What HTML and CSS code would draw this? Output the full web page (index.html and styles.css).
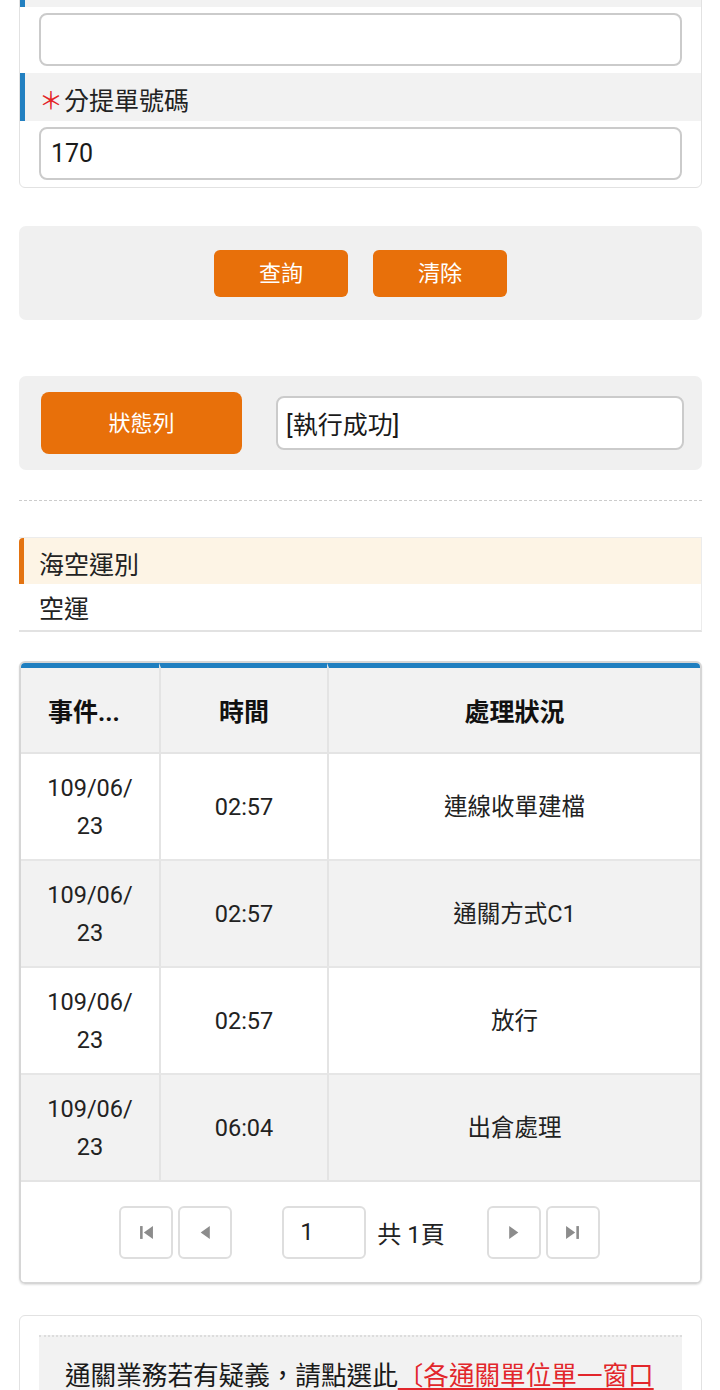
FILE: index.html
```html
<!DOCTYPE html>
<html lang="zh-Hant">
<head>
<meta charset="utf-8">
<title>查詢</title>
<link rel="stylesheet" href="styles.css">
</head>
<body>
<div class="page">
  <section class="card form-card">
    <div class="field-label">主提單號碼</div>
    <div class="field-input"><div class="input"></div></div>
    <div class="field-label"><span class="req">＊</span>分提單號碼</div>
    <div class="field-input"><div class="input">170</div></div>
  </section>

  <section class="panel actions">
    <button class="btn">查詢</button>
    <button class="btn">清除</button>
  </section>

  <section class="panel status">
    <button class="btn btn-status">狀態列</button>
    <div class="input status-input">[執行成功]</div>
  </section>

  <div class="divider"></div>

  <section class="ship">
    <div class="ship-label">海空運別</div>
    <div class="ship-value">空運</div>
  </section>

  <section class="table-card">
    <table class="grid">
      <colgroup><col class="c1"><col class="c2"><col class="c3"></colgroup>
      <thead>
        <tr><th>事件...</th><th>時間</th><th>處理狀況</th></tr>
      </thead>
      <tbody>
        <tr><td>109/06/<br>23</td><td>02:57</td><td>連線收單建檔</td></tr>
        <tr class="alt"><td>109/06/<br>23</td><td>02:57</td><td>通關方式C1</td></tr>
        <tr><td>109/06/<br>23</td><td>02:57</td><td>放行</td></tr>
        <tr class="alt"><td>109/06/<br>23</td><td>06:04</td><td>出倉處理</td></tr>
      </tbody>
    </table>
    <div class="pager">
      <div class="pg-group">
        <button class="pg-btn"><svg viewBox="0 0 14 14"><rect x="1" y="1" width="2.4" height="12" fill="#8c8c8c"/><path d="M13 1 L4.5 7 L13 13 Z" fill="#8c8c8c"/></svg></button>
        <button class="pg-btn"><svg viewBox="0 0 14 14"><path d="M11 1 L2.5 7 L11 13 Z" fill="#8c8c8c"/></svg></button>
      </div>
      <div class="pg-input">1</div>
      <div class="pg-total">共 1頁</div>
      <div class="pg-group">
        <button class="pg-btn"><svg viewBox="0 0 14 14"><path d="M3 1 L11.5 7 L3 13 Z" fill="#8c8c8c"/></svg></button>
        <button class="pg-btn"><svg viewBox="0 0 14 14"><path d="M1 1 L9.5 7 L1 13 Z" fill="#8c8c8c"/><rect x="10.6" y="1" width="2.4" height="12" fill="#8c8c8c"/></svg></button>
      </div>
    </div>
  </section>

  <section class="card footer-card">
    <div class="notice">通關業務若有疑義，請點選此<a class="link" href="#">〔各通關單位單一窗口聯絡資訊〕</a></div>
  </section>
</div>
</body>
</html>
```

FILE: styles.css
```css
* { box-sizing: border-box; }

body {
  margin: 0;
  background: #ffffff;
  font-family: Roboto, "Noto Sans CJK TC", sans-serif;
  color: #222222;
}

.page {
  padding: 0 18px 40px 19px;
}

.card {
  border: 1px solid #e2e2e2;
  border-radius: 6px;
  background: #ffffff;
}

.form-card {
  margin-top: -42px;
  overflow: hidden;
}

.field-label {
  height: 48px;
  background: #f2f2f2;
  border-left: 5px solid #2280c1;
  display: flex;
  align-items: center;
  padding-left: 16px;
  padding-top: 3px;
  font-size: 25px;
  color: #222;
}

.req {
  color: #e42326;
  font-family: "Noto Sans CJK TC", sans-serif;
  font-size: 24px;
  margin-left: -2px;
  margin-right: 1px;
}

.field-input {
  padding: 6px 19px 7px;
}

.input {
  height: 53px;
  border: 2px solid #cbcbcb;
  border-radius: 8px;
  background: #ffffff;
  display: flex;
  align-items: center;
  padding-left: 10px;
  font-size: 25px;
  color: #1a1a1a;
}

.panel {
  background: #f0f0f0;
  border-radius: 7px;
  height: 94px;
  display: flex;
  align-items: center;
}

.actions {
  margin-top: 38px;
  justify-content: center;
  gap: 25px;
}

.btn {
  width: 134px;
  height: 47px;
  border: none;
  border-radius: 6px;
  background: #e8700a;
  color: #ffffff;
  font-family: "Noto Sans CJK TC", sans-serif;
  font-size: 22px;
  padding: 0 0 5px;
}

.status {
  margin-top: 56px;
  padding: 0 18px 0 22px;
}

.btn-status {
  width: 201px;
  height: 62px;
  border-radius: 8px;
}

.status-input {
  flex: 1;
  margin-left: 34px;
  height: 54px;
  padding-left: 8px;
}

.divider {
  margin-top: 30px;
  border-top: 1px dashed #cccccc;
}

.ship {
  margin-top: 36px;
  border: 1px solid #ececec;
  border-bottom: 2px solid #e2e2e2;
  border-left: none;
}

.ship-label {
  height: 46px;
  background: #fdf4e5;
  border-left: 5px solid #e37311;
  border-top-left-radius: 4px;
  display: flex;
  align-items: center;
  padding-left: 15px;
  padding-top: 3px;
  font-size: 25px;
}

.ship-value {
  height: 46px;
  display: flex;
  align-items: center;
  padding-left: 20px;
  font-size: 25px;
}

.table-card {
  margin-top: 29px;
  border: 2px solid #d6d6d6;
  border-radius: 6px;
  overflow: hidden;
  box-shadow: 0 1px 2px rgba(0,0,0,0.12);
}

.grid {
  width: 100%;
  border-collapse: separate;
  border-spacing: 0;
  table-layout: fixed;
}

.c1 { width: 138px; }
.c2 { width: 168px; }

.grid th {
  height: 91px;
  background: #f2f2f2;
  border-top: 5px solid #1f7fc0;
  border-bottom: 2px solid #e4e4e4;
  font-size: 25px;
  font-weight: 700;
  text-align: center;
  color: #111;
  padding: 0;
}

.grid th:first-child {
  padding-right: 12px;
}

.grid th + th,
.grid td + td {
  border-left: 2px solid #e4e4e4;
}

.grid td {
  height: 107px;
  text-align: center;
  font-size: 23.5px;
  line-height: 38px;
  color: #222;
  padding: 0;
  background: #ffffff;
}

.grid tbody tr:first-child td {
  height: 105px;
}

.grid tbody tr + tr td {
  border-top: 2px solid #e6e6e6;
}

.grid tr.alt td {
  background: #f2f2f2;
}

.pager {
  height: 102px;
  border-top: 2px solid #e4e4e4;
  background: #ffffff;
  display: flex;
  align-items: center;
  justify-content: center;
  padding-right: 2px;
}

.pg-group {
  display: flex;
  gap: 5px;
}

.pg-btn {
  width: 54px;
  height: 53px;
  border: 2px solid #dedede;
  border-radius: 6px;
  background: #ffffff;
  display: flex;
  align-items: center;
  justify-content: center;
  padding: 0;
}

.pg-btn svg { width: 15px; height: 15px; display: block; }

.pg-input {
  width: 84px;
  height: 53px;
  margin-left: 50px;
  border: 2px solid #dedede;
  border-radius: 6px;
  display: flex;
  align-items: center;
  padding-left: 16px;
  font-size: 24px;
}

.pg-total {
  margin-left: 11px;
  margin-right: 42px;
  font-size: 24px;
}

.footer-card {
  margin-top: 31px;
  padding: 19px 19px 0;
}

.notice {
  border-top: 2px dotted #dddddd;
  background: #f2f2f2;
  padding: 21px 18px 20px 26px;
  font-size: 25.6px;
  line-height: 36px;
  color: #1a1a1a;
  line-break: anywhere;
}

.link {
  color: #e2262b;
  text-decoration: underline;
  text-underline-offset: 3px;
}
```
